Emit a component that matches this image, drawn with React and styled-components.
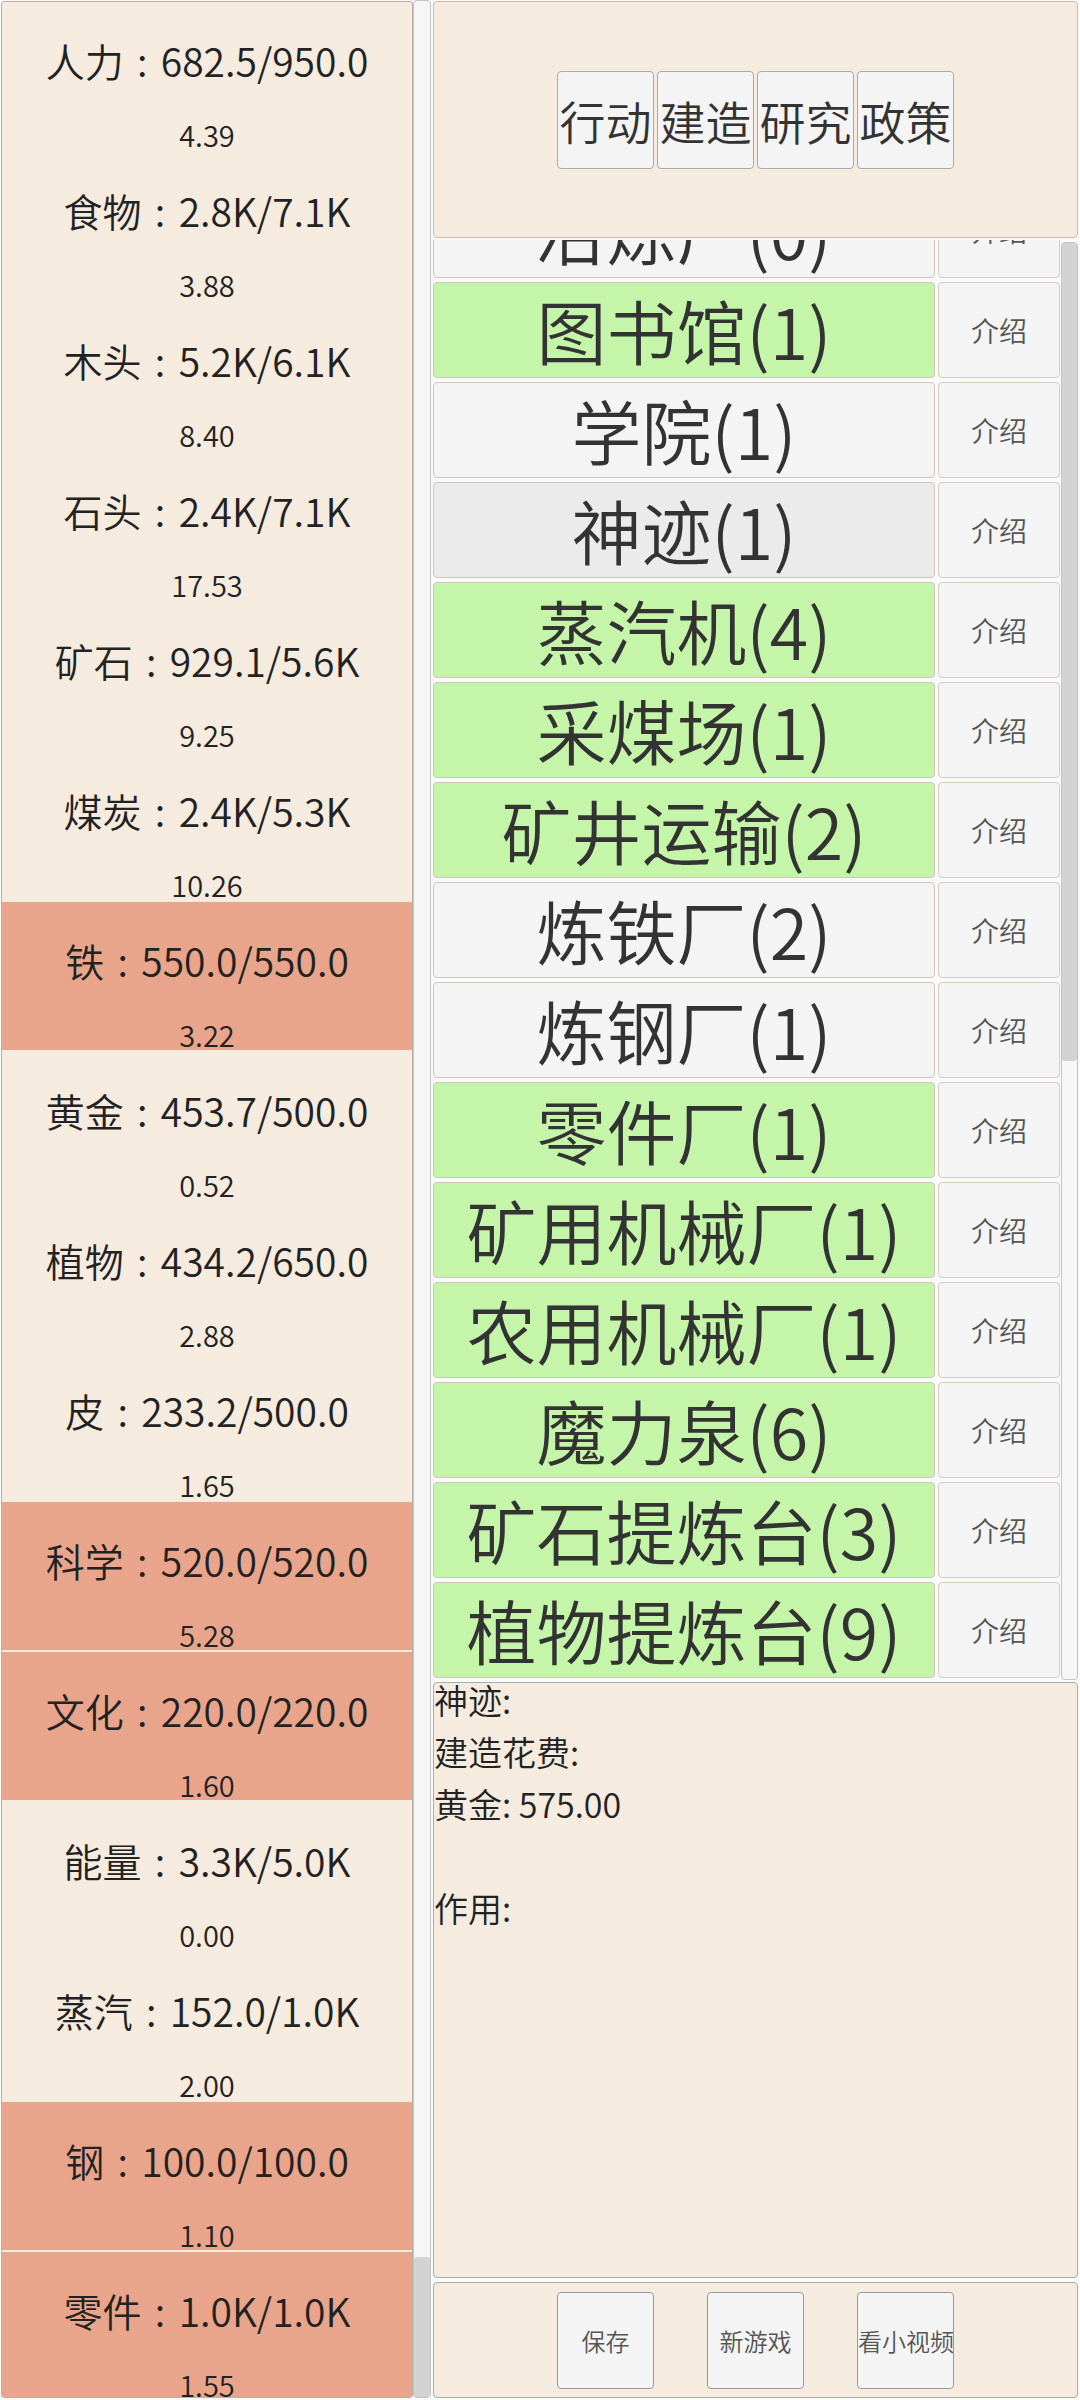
import { useLayoutEffect, useRef } from "react";
import styled, { createGlobalStyle } from "styled-components";

const GlobalStyle = createGlobalStyle`
  * { box-sizing: border-box; }
  body {
    margin: 0;
    background: #fafafa;
    font-family: "Noto Sans CJK SC DemiLight", "Noto Sans CJK SC", "Noto Sans", sans-serif;
    font-weight: 350;
  }
  button { font-weight: inherit; }
`;

const stats = [
  { name: "人力", value: "682.5/950.0", rate: "4.39" },
  { name: "食物", value: "2.8K/7.1K", rate: "3.88" },
  { name: "木头", value: "5.2K/6.1K", rate: "8.40" },
  { name: "石头", value: "2.4K/7.1K", rate: "17.53" },
  { name: "矿石", value: "929.1/5.6K", rate: "9.25" },
  { name: "煤炭", value: "2.4K/5.3K", rate: "10.26" },
  { name: "铁", value: "550.0/550.0", rate: "3.22", full: true },
  { name: "黄金", value: "453.7/500.0", rate: "0.52" },
  { name: "植物", value: "434.2/650.0", rate: "2.88" },
  { name: "皮", value: "233.2/500.0", rate: "1.65" },
  { name: "科学", value: "520.0/520.0", rate: "5.28", full: true },
  { name: "文化", value: "220.0/220.0", rate: "1.60", full: true },
  { name: "能量", value: "3.3K/5.0K", rate: "0.00" },
  { name: "蒸汽", value: "152.0/1.0K", rate: "2.00" },
  { name: "钢", value: "100.0/100.0", rate: "1.10", full: true },
  { name: "零件", value: "1.0K/1.0K", rate: "1.55", full: true },
];

const buildings = [
  { name: "冶炼厂", count: 0, state: "idle" },
  { name: "图书馆", count: 1, state: "ok" },
  { name: "学院", count: 1, state: "idle" },
  { name: "神迹", count: 1, state: "selected" },
  { name: "蒸汽机", count: 4, state: "ok" },
  { name: "采煤场", count: 1, state: "ok" },
  { name: "矿井运输", count: 2, state: "ok" },
  { name: "炼铁厂", count: 2, state: "idle" },
  { name: "炼钢厂", count: 1, state: "idle" },
  { name: "零件厂", count: 1, state: "ok" },
  { name: "矿用机械厂", count: 1, state: "ok" },
  { name: "农用机械厂", count: 1, state: "ok" },
  { name: "魔力泉", count: 6, state: "ok" },
  { name: "矿石提炼台", count: 3, state: "ok" },
  { name: "植物提炼台", count: 9, state: "ok" },
];

const cellColors = {
  ok: "#c5f5a9",
  idle: "#f4f4f4",
  selected: "#ebebeb",
};

const App = () => {
  const listRef = useRef(null);

  // the building list is scrolled a little, first row half under the tab bar
  useLayoutEffect(() => {
    if (listRef.current) listRef.current.scrollTop = 58;
  }, []);

  return (
    <>
      <GlobalStyle />
      <Page>
        <StatPanel>
          {stats.map((s) => (
            <StatItem key={s.name} $full={s.full}>
              <StatLabel>
                {s.name}
                <Colon>:</Colon>
                {s.value}
              </StatLabel>
              <StatRate>{s.rate}</StatRate>
            </StatItem>
          ))}
        </StatPanel>
        <ScrollTrack $end>
          <Thumb $size={140} />
        </ScrollTrack>

        <RightColumn>
          <TopBar>
            <TabButton>行动</TabButton>
            <TabButton>建造</TabButton>
            <TabButton>研究</TabButton>
            <TabButton>政策</TabButton>
          </TopBar>

          <ListArea>
            <ListViewport ref={listRef}>
              {buildings.map((b) => (
                <Row key={b.name}>
                  <NameCell $state={b.state}>
                    {b.name}({b.count})
                  </NameCell>
                  <InfoButton>介绍</InfoButton>
                </Row>
              ))}
            </ListViewport>
            <ScrollTrack>
              <Thumb $size={818} />
            </ScrollTrack>
          </ListArea>

          <Desc>
            <DescLine>神迹:</DescLine>
            <DescLine>建造花费:</DescLine>
            <DescLine>黄金: 575.00</DescLine>
            <DescLine />
            <DescLine>作用:</DescLine>
          </Desc>

          <BottomBar>
            <ActionButton>保存</ActionButton>
            <ActionButton>新游戏</ActionButton>
            <ActionButton>看小视频</ActionButton>
          </BottomBar>
        </RightColumn>
      </Page>
    </>
  );
};

export default App;

const Page = styled.div`
  width: 1080px;
  height: 2400px;
  padding: 1px 2px 2px 1px;
  display: flex;
  overflow: hidden;
`;

const StatPanel = styled.div`
  width: 412px;
  flex-shrink: 0;
  background: #f5ebdf;
  border: 1px solid #bab2a7;
  border-radius: 3px;
  overflow: hidden;
  display: flex;
  flex-direction: column;
  gap: 2px;
`;

const StatItem = styled.div`
  height: 148px;
  flex-shrink: 0;
  text-align: center;
  color: #222;
  background: ${(p) => (p.$full ? "#e8a58c" : "transparent")};
`;

const StatLabel = styled.div`
  font-size: 39px;
  line-height: 116px;
  white-space: nowrap;
`;

const Colon = styled.span`
  display: inline-block;
  width: 0.95em;
  text-align: center;
`;

const StatRate = styled.div`
  font-size: 29px;
  line-height: 32px;
`;

const ScrollTrack = styled.div`
  width: 18px;
  flex-shrink: 0;
  margin-top: -1px;
  background: #f6f6f6;
  border: 1px solid #c2c2c2;
  border-radius: 4px;
  display: flex;
  flex-direction: column;
  justify-content: ${(p) => (p.$end ? "flex-end" : "flex-start")};
  overflow: hidden;
`;

const Thumb = styled.div`
  height: ${(p) => p.$size}px;
  flex-shrink: 0;
  background: #d3d3d3;
  border-radius: 3px;
`;

const RightColumn = styled.div`
  width: 645px;
  margin-left: 2px;
  flex-shrink: 0;
  display: flex;
  flex-direction: column;
`;

const TopBar = styled.div`
  height: 237px;
  flex-shrink: 0;
  background: #f5ebdf;
  border: 1px solid #c6bdb1;
  border-radius: 4px;
  display: flex;
  align-items: center;
  justify-content: center;
  gap: 3px;
`;

const TabButton = styled.button`
  width: 97px;
  height: 98px;
  padding: 0;
  font-family: inherit;
  font-size: 46px;
  color: #333;
  background: #f4f4f4;
  border: 1px solid #a9a9a9;
  border-radius: 4px;
  white-space: nowrap;
  display: flex;
  align-items: center;
  justify-content: center;
  overflow: visible;
`;

const ListArea = styled.div`
  height: 1440px;
  margin-top: 2px;
  flex-shrink: 0;
  display: flex;
  gap: 1px;

  ${ScrollTrack} {
    width: 17px;
    margin-top: 2px;
  }
`;

const ListViewport = styled.div`
  flex: 1;
  overflow: hidden;
  display: flex;
  flex-direction: column;
  gap: 4px;
`;

const Row = styled.div`
  height: 96px;
  flex-shrink: 0;
  display: flex;
  gap: 3px;
`;

const NameCell = styled.div`
  width: 502px;
  flex-shrink: 0;
  background: ${(p) => cellColors[p.$state]};
  border: 1px solid #d0c7bb;
  border-radius: 4px;
  display: flex;
  align-items: center;
  justify-content: center;
  font-size: 70px;
  line-height: 1;
  color: #333;
  white-space: nowrap;
`;

const InfoButton = styled.button`
  flex: 1;
  padding: 0;
  font-family: inherit;
  font-size: 28px;
  color: #555;
  background: #f4f4f4;
  border: 1px solid #d6cec3;
  border-radius: 4px;
`;

const Desc = styled.div`
  height: 596px;
  margin-top: 2px;
  flex-shrink: 0;
  background: #f5ebdf;
  border: 1px solid #a3b2a4;
  border-radius: 4px;
  display: flex;
  flex-direction: column;
  gap: 18px;
  font-size: 34px;
  color: #222;
`;

const DescLine = styled.div`
  height: 34px;
  line-height: 34px;
  white-space: nowrap;
`;

const BottomBar = styled.div`
  flex: 1;
  margin-top: 4px;
  background: #f5ebdf;
  border: 1px solid #a3b2a4;
  border-radius: 4px;
  display: flex;
  align-items: center;
  justify-content: center;
  gap: 53px;
`;

const ActionButton = styled.button`
  width: 97px;
  height: 97px;
  padding: 0;
  font-family: inherit;
  font-size: 24px;
  color: #555;
  background: #f4f4f4;
  border: 1px solid #999;
  border-radius: 4px;
  white-space: nowrap;
`;
